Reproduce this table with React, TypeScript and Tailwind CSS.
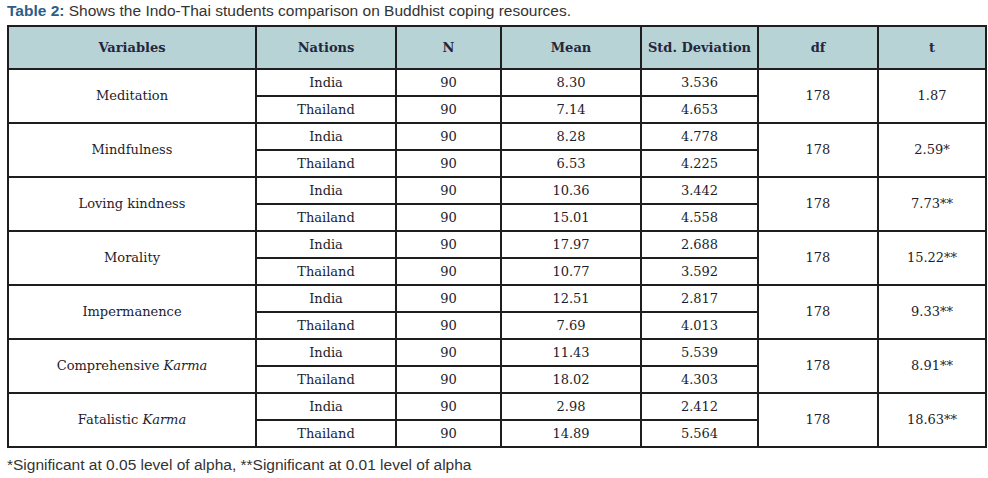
const rows = [
  { v: "Meditation", k: "", india: ["8.30", "3.536"], thai: ["7.14", "4.653"], t: "1.87" },
  { v: "Mindfulness", k: "", india: ["8.28", "4.778"], thai: ["6.53", "4.225"], t: "2.59*" },
  { v: "Loving kindness", k: "", india: ["10.36", "3.442"], thai: ["15.01", "4.558"], t: "7.73**" },
  { v: "Morality", k: "", india: ["17.97", "2.688"], thai: ["10.77", "3.592"], t: "15.22**" },
  { v: "Impermanence", k: "", india: ["12.51", "2.817"], thai: ["7.69", "4.013"], t: "9.33**" },
  { v: "Comprehensive ", k: "Karma", india: ["11.43", "5.539"], thai: ["18.02", "4.303"], t: "8.91**" },
  { v: "Fatalistic ", k: "Karma", india: ["2.98", "2.412"], thai: ["14.89", "5.564"], t: "18.63**" },
];

const cell = "border-2 border-[#1e1e1e] text-center align-middle p-0";

export default function App() {
  return (
    <div className="w-[988px] h-[478px] bg-white px-[7px] pt-[2px]">
      <p className="text-[15.5px] leading-[18px] text-[#333] font-['Liberation_Sans',Arial,sans-serif]">
        <span className="font-bold text-[#2c5d8a]">Table 2:</span> Shows the Indo-Thai students comparison on Buddhist coping resources.
      </p>
      <table className="mt-[5px] w-[978px] table-fixed border-collapse text-[13px] text-[#1d1d2b] font-['DejaVu_Serif',serif]">
        <colgroup>
          <col className="w-[248px]" />
          <col className="w-[140px]" />
          <col className="w-[105px]" />
          <col className="w-[140px]" />
          <col className="w-[117px]" />
          <col className="w-[120px]" />
          <col className="w-[108px]" />
        </colgroup>
        <thead>
          <tr className="h-[43px] bg-[#b8d3d6] font-bold text-[#26263a]">
            <th className={cell}>Variables</th>
            <th className={cell}>Nations</th>
            <th className={cell}>N</th>
            <th className={cell}>Mean</th>
            <th className={cell}>Std. Deviation</th>
            <th className={cell}>df</th>
            <th className={cell}>t</th>
          </tr>
        </thead>
        <tbody>
          {rows.map((r) => (
            <>
              <tr key={r.v + "a"} className="h-[27px]">
                <td rowSpan={2} className={cell}>
                  {r.v}
                  {r.k && <i>{r.k}</i>}
                </td>
                <td className={cell}>India</td>
                <td className={cell}>90</td>
                <td className={cell}>{r.india[0]}</td>
                <td className={cell}>{r.india[1]}</td>
                <td rowSpan={2} className={cell}>178</td>
                <td rowSpan={2} className={cell}>{r.t}</td>
              </tr>
              <tr key={r.v + "b"} className="h-[27px]">
                <td className={cell}>Thailand</td>
                <td className={cell}>90</td>
                <td className={cell}>{r.thai[0]}</td>
                <td className={cell}>{r.thai[1]}</td>
              </tr>
            </>
          ))}
        </tbody>
      </table>
      <p className="mt-[8px] text-[15.5px] leading-[18px] text-[#333] font-['Liberation_Sans',Arial,sans-serif]">
        *Significant at 0.05 level of alpha, **Significant at 0.01 level of alpha
      </p>
    </div>
  );
}
